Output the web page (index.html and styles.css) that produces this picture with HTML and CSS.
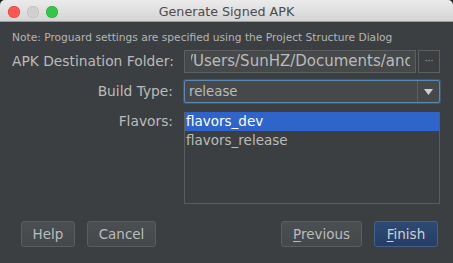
FILE: index.html
```html
<!DOCTYPE html>
<html>
<head>
<meta charset="utf-8">
<link rel="stylesheet" href="styles.css">
</head>
<body>
<div class="window">
  <div class="titlebar">
    <div class="lights">
      <span class="light red"></span>
      <span class="light grey"></span>
      <span class="light green"></span>
    </div>
    <div class="title">Generate Signed APK</div>
  </div>
  <div class="content">
    <div class="note">Note: Proguard settings are specified using the Project Structure Dialog</div>
    <div class="form">
      <div class="label label-left">APK Destination Folder:</div>
      <div class="field-row">
        <div class="textfield"><div class="tf-clip"><span class="tf-text">/Users/SunHZ/Documents/andro</span></div></div>
        <div class="browse">···</div>
      </div>
      <div class="label">Build Type:</div>
      <div class="combo">
        <div class="combo-text">release</div>
        <div class="combo-arrow"><svg width="9" height="6" viewBox="0 0 9 6"><polygon points="0,0 9,0 4.5,6" fill="#d0d0d0"/></svg></div>
      </div>
      <div class="label label-flavors">Flavors:</div>
      <div class="list">
        <div class="item selected">flavors_dev</div>
        <div class="item">flavors_release</div>
      </div>
    </div>
    <div class="buttons">
      <div class="group">
        <div class="btn btn-help">Help</div>
        <div class="btn btn-cancel">Cancel</div>
      </div>
      <div class="group">
        <div class="btn btn-prev"><u>P</u>revious</div>
        <div class="btn btn-finish"><u>F</u>inish</div>
      </div>
    </div>
  </div>
</div>
</body>
</html>
```
FILE: styles.css
```css
html, body {
  margin: 0;
  padding: 0;
  background: #1e1e1e;
}
body {
  width: 453px;
  height: 263px;
  overflow: hidden;
  font-family: "DejaVu Sans", sans-serif;
}
.window {
  width: 453px;
  height: 263px;
  background: #3c3f41;
  border-radius: 5px 5px 0 0;
  overflow: hidden;
  display: flex;
  flex-direction: column;
}
.titlebar {
  height: 21px;
  flex: none;
  background: linear-gradient(#ebebeb, #d5d5d5);
  border-bottom: 1px solid #9a9a9a;
  position: relative;
  display: flex;
  align-items: center;
  justify-content: center;
}
.lights {
  position: absolute;
  left: 8px;
  top: 6px;
  display: flex;
  gap: 7px;
}
.light {
  width: 12px;
  height: 12px;
  border-radius: 50%;
  display: block;
}
.red { background: #fc5753; box-shadow: inset 0 0 0 0.5px #de3f3b; }
.grey { background: #d0d0d0; box-shadow: inset 0 0 0 0.5px #b9b9b9; }
.green { background: #33c748; box-shadow: inset 0 0 0 0.5px #27aa35; }
.title {
  font-size: 12.7px;
  color: #4a4a4a;
  padding-top: 1px;
}
.content {
  flex: 1;
  padding: 8px 12px 0 12px;
  display: flex;
  flex-direction: column;
}
.note {
  font-size: 10.65px;
  color: #b5b5b5;
  height: 15px;
  line-height: 15px;
  white-space: nowrap;
}
.form {
  margin-top: 5px;
  display: grid;
  grid-template-columns: 161px 256px;
  column-gap: 11px;
  row-gap: 7px;
}
.label {
  font-size: 13.8px;
  color: #bbbbbb;
  text-align: right;
  line-height: 23px;
  white-space: nowrap;
}
.label-left { text-align: left; }
.label-flavors { line-height: 19px; margin-top: 2px; }
.field-row {
  display: flex;
  gap: 2px;
  height: 23px;
}
.textfield {
  width: 232px;
  box-sizing: border-box;
  height: 23px;
  background: #45494a;
  border: 1px solid #5e6060;
  padding: 0 5px 0 6px;
}
.tf-clip {
  overflow: hidden;
  white-space: nowrap;
  font-size: 15px;
  color: #bbbbbb;
  line-height: 21px;
}
.tf-text {
  display: inline-block;
  margin-left: -3px;
}
.browse {
  width: 22px;
  box-sizing: border-box;
  height: 23px;
  border: 1px solid #5e6060;
  color: #bbbbbb;
  font-size: 9px;
  text-align: center;
  line-height: 21px;
  background: #3c3f41;
}
.combo {
  height: 23px;
  box-sizing: border-box;
  border: 1px solid #5b88b5;
  box-shadow: 0 0 0 1px #3d5873;
  border-radius: 2px;
  background: #45494a;
  display: flex;
}
.combo-text {
  flex: 1;
  font-size: 13.3px;
  color: #bbbbbb;
  line-height: 21px;
  padding-left: 4px;
}
.combo-arrow {
  width: 21px;
  border-left: 1px solid #5e6060;
  display: flex;
  align-items: center;
  justify-content: center;
}
.list {
  height: 92px;
  box-sizing: border-box;
  border-left: 1px solid #5a5d5f;
  border-right: 1px solid #5a5d5f;
  border-bottom: 1px solid #5a5d5f;
  margin-top: 2px;
}
.item {
  height: 19px;
  line-height: 19px;
  font-size: 13.5px;
  color: #bbbbbb;
  padding-left: 1px;
  white-space: nowrap;
}
.item.selected {
  background: #2f65ca;
  color: #ffffff;
}
.buttons {
  margin-top: 17px;
  display: flex;
  justify-content: space-between;
  padding: 0 3px 0 9px;
}
.group {
  display: flex;
  gap: 12px;
}
.btn {
  height: 26px;
  box-sizing: border-box;
  border: 1px solid #5a5e60;
  border-radius: 3px;
  background: linear-gradient(#4b4f51, #44484a);
  color: #bbbbbb;
  font-size: 13.5px;
  line-height: 24px;
  text-align: center;
}
.btn u { text-decoration-thickness: 1px; text-underline-offset: 2px; }
.btn-help { width: 54px; }
.btn-cancel { width: 69px; }
.btn-prev { width: 81px; }
.btn-finish {
  width: 64px;
  background: linear-gradient(#2d4a75, #263e62);
  border-color: #46608a;
  color: #d0d0d0;
}
```
